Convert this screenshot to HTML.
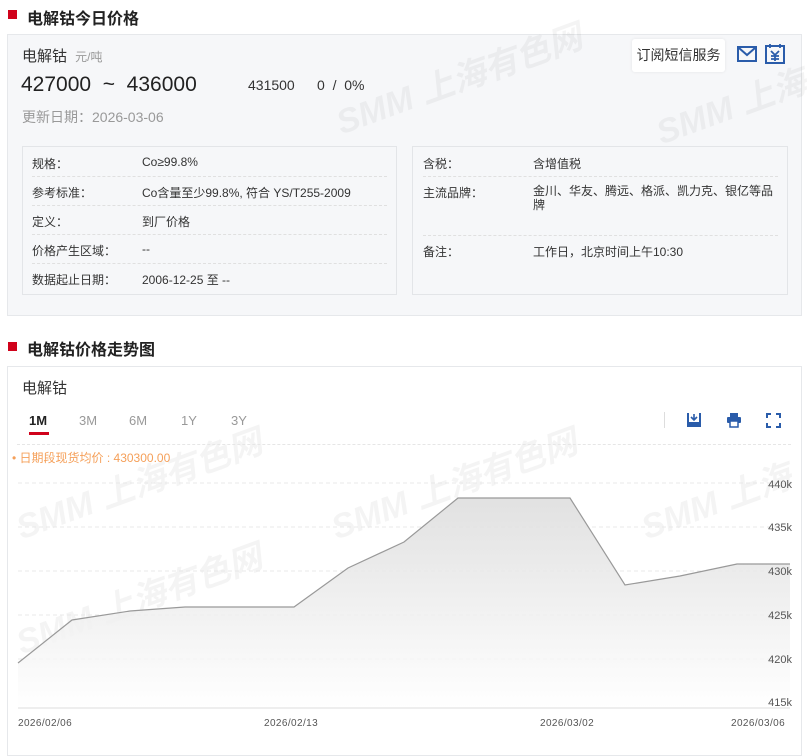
<!DOCTYPE html>
<html><head><meta charset="utf-8"><style>
*{margin:0;padding:0;box-sizing:border-box}
body{width:810px;height:747px;background:#fff;font-family:"Liberation Sans","Noto Sans CJK SC",sans-serif;color:#333;position:relative;overflow:hidden}
.abs{position:absolute}
.h{font-size:16px;font-weight:bold;color:#222}
.sq{width:9px;height:9px;background:#d0021b}
.box{border:1px solid #e6e8eb;background:#f6f7f9}
.t{font-size:12px;color:#333;white-space:nowrap}
.dash{border-top:1px dashed #e0e0e0}
.g{font-size:13px;color:#999}
.wm{position:absolute;font-size:34px;font-weight:bold;font-style:italic;color:rgba(0,0,0,0.045);transform:rotate(-20deg);white-space:nowrap;transform-origin:left bottom}
</style></head><body>
<div class="abs sq" style="left:8px;top:10px"></div>
<div class="abs h" style="left:27px;top:5px">电解钴今日价格</div>
<div class="abs box" style="left:7px;top:34px;width:795px;height:282px"></div>
<div class="wm" style="left:345px;top:95px">SMM 上海有色网</div>
<div class="wm" style="left:665px;top:105px">SMM 上海</div>
<div class="abs" style="left:22px;top:45px;font-size:15px;color:#333">电解钴 <span style="font-size:12px;color:#999;margin-left:4px">元/吨</span></div>
<div class="abs" style="left:21px;top:73px;font-size:21px;color:#222">427000 &nbsp;~&nbsp; 436000</div>
<div class="abs" style="left:248px;top:77px;font-size:14px;color:#333">431500</div>
<div class="abs" style="left:317px;top:77px;font-size:14px;color:#333">0 &nbsp;/&nbsp; 0%</div>
<div class="abs g" style="left:22px;top:107px;font-size:14px">更新日期：2026-03-06</div>
<div class="abs" style="left:632px;top:39px;width:93px;height:33px;background:#fff;border-radius:3px;box-shadow:0 0 3px rgba(0,0,0,.08);font-size:14px;color:#333;text-align:center;line-height:33px">订阅短信服务</div>
<svg class="abs" style="left:737px;top:45px" width="20" height="18"><rect x="1" y="2" width="18" height="14" fill="none" stroke="#2a5caa" stroke-width="2"/><path d="M2 3l8 7 8-7" fill="none" stroke="#2a5caa" stroke-width="2"/></svg>
<svg class="abs" style="left:765px;top:43px" width="20" height="22"><rect x="1" y="3" width="18" height="17" fill="none" stroke="#2a5caa" stroke-width="2"/><path d="M5 1v4M15 1v4M6 8l4 4 4-4M10 12v6M6 13h8M6 16h8" fill="none" stroke="#2a5caa" stroke-width="1.8"/></svg>
<div class="abs" style="left:22px;top:146px;width:375px;height:149px;border:1px solid #e3e5e8"></div>
<div class="abs" style="left:412px;top:146px;width:376px;height:149px;border:1px solid #e3e5e8"></div>
<div class="abs t" style="left:32px;top:155px">规格：</div><div class="abs t" style="left:142px;top:155px">Co≥99.8%</div>
<div class="abs dash" style="left:32px;top:176px;width:355px"></div>
<div class="abs t" style="left:32px;top:184px">参考标准：</div><div class="abs t" style="left:142px;top:184px">Co含量至少99.8%, 符合 YS/T255-2009</div>
<div class="abs dash" style="left:32px;top:205px;width:355px"></div>
<div class="abs t" style="left:32px;top:213px">定义：</div><div class="abs t" style="left:142px;top:213px">到厂价格</div>
<div class="abs dash" style="left:32px;top:234px;width:355px"></div>
<div class="abs t" style="left:32px;top:242px">价格产生区域：</div><div class="abs t" style="left:142px;top:242px">--</div>
<div class="abs dash" style="left:32px;top:263px;width:355px"></div>
<div class="abs t" style="left:32px;top:271px">数据起止日期：</div><div class="abs t" style="left:142px;top:271px">2006-12-25 至 --</div>
<div class="abs t" style="left:423px;top:155px">含税：</div><div class="abs t" style="left:533px;top:155px">含增值税</div>
<div class="abs dash" style="left:423px;top:176px;width:355px"></div>
<div class="abs t" style="left:423px;top:184px">主流品牌：</div><div class="abs t" style="left:533px;top:184px;white-space:normal;width:245px;line-height:14px">金川、华友、腾远、格派、凯力克、银亿等品牌</div>
<div class="abs dash" style="left:423px;top:235px;width:355px"></div>
<div class="abs t" style="left:423px;top:243px">备注：</div><div class="abs t" style="left:533px;top:243px">工作日，北京时间上午10:30</div>

<div class="abs sq" style="left:8px;top:342px"></div>
<div class="abs h" style="left:27px;top:336px">电解钴价格走势图</div>
<div class="abs" style="left:7px;top:366px;width:795px;height:390px;border:1px solid #e6e8eb"></div>
<div class="wm" style="left:25px;top:500px">SMM 上海有色网</div>
<div class="wm" style="left:340px;top:500px">SMM 上海有色网</div>
<div class="wm" style="left:650px;top:500px">SMM 上海</div>
<div class="wm" style="left:25px;top:615px">SMM 上海有色网</div>
<div class="abs" style="left:22px;top:377px;font-size:15px;color:#333">电解钴</div>
<div class="abs" style="left:29px;top:413px;font-size:13px;font-weight:bold;color:#222">1M</div>
<div class="abs" style="left:29px;top:432px;width:20px;height:3px;background:#d0021b"></div>
<div class="abs g" style="left:79px;top:413px">3M</div>
<div class="abs g" style="left:129px;top:413px">6M</div>
<div class="abs g" style="left:181px;top:413px">1Y</div>
<div class="abs g" style="left:231px;top:413px">3Y</div>
<div class="abs" style="left:664px;top:412px;width:1px;height:16px;background:#ddd"></div>
<svg class="abs" style="left:686px;top:412px" width="16" height="16"><rect x="1" y="1" width="14" height="14" fill="#2a5caa"/><rect x="3" y="1" width="10" height="9" fill="#fff"/><path d="M8 2v6M5 5l3 3 3-3" stroke="#2a5caa" stroke-width="1.6" fill="none"/></svg>
<svg class="abs" style="left:726px;top:412px" width="16" height="16"><rect x="4" y="1" width="8" height="4" fill="#2a5caa"/><rect x="1" y="5" width="14" height="6" rx="1" fill="#2a5caa"/><rect x="4" y="9" width="8" height="6" fill="#fff" stroke="#2a5caa" stroke-width="1.5"/></svg>
<svg class="abs" style="left:766px;top:413px" width="15" height="15" fill="none" stroke="#2a5caa" stroke-width="2"><path d="M1 5V1h4M10 1h4v4M14 10v4h-4M5 14H1v-4"/></svg>
<div class="abs" style="left:17px;top:444px;width:774px;border-top:1px dashed #e6e6e6"></div>
<div class="abs" style="left:12px;top:449px;font-size:12px;color:#f5a05a">• 日期段现货均价 : 430300.00</div>
<svg class="abs" style="left:0;top:470px" width="810" height="277">
<defs><linearGradient id="gr" x1="0" y1="0" x2="0" y2="1"><stop offset="0" stop-color="#dcdcdc" stop-opacity="0.85"/><stop offset="1" stop-color="#fff" stop-opacity="0.85"/></linearGradient></defs>
<g stroke="#e8e8e8" stroke-dasharray="4,3"><line x1="18" y1="13" x2="790" y2="13"/><line x1="18" y1="57" x2="790" y2="57"/><line x1="18" y1="101" x2="790" y2="101"/><line x1="18" y1="145" x2="790" y2="145"/><line x1="18" y1="189" x2="790" y2="189"/></g>
<path d="M18 193L72 150L130 141L185 137L294 137L348 98L404 72L458 28L570 28L625 115L680 106L737 94L790 94V238H18Z" fill="url(#gr)"/>
<path d="M18 193L72 150L130 141L185 137L294 137L348 98L404 72L458 28L570 28L625 115L680 106L737 94L790 94" fill="none" stroke="#999" stroke-width="1.2"/>
<line x1="18" y1="238" x2="790" y2="238" stroke="#ddd"/>
<g font-size="11" fill="#555" text-anchor="end" font-family="Liberation Sans"><text x="792" y="18">440k</text><text x="792" y="61">435k</text><text x="792" y="105">430k</text><text x="792" y="149">425k</text><text x="792" y="193">420k</text><text x="792" y="236">415k</text></g>
<g font-size="10" fill="#555" font-family="Liberation Sans" letter-spacing="0.4"><text x="18" y="256">2026/02/06</text><text x="264" y="256">2026/02/13</text><text x="540" y="256">2026/03/02</text><text x="731" y="256">2026/03/06</text></g>
</svg>
</body></html>
